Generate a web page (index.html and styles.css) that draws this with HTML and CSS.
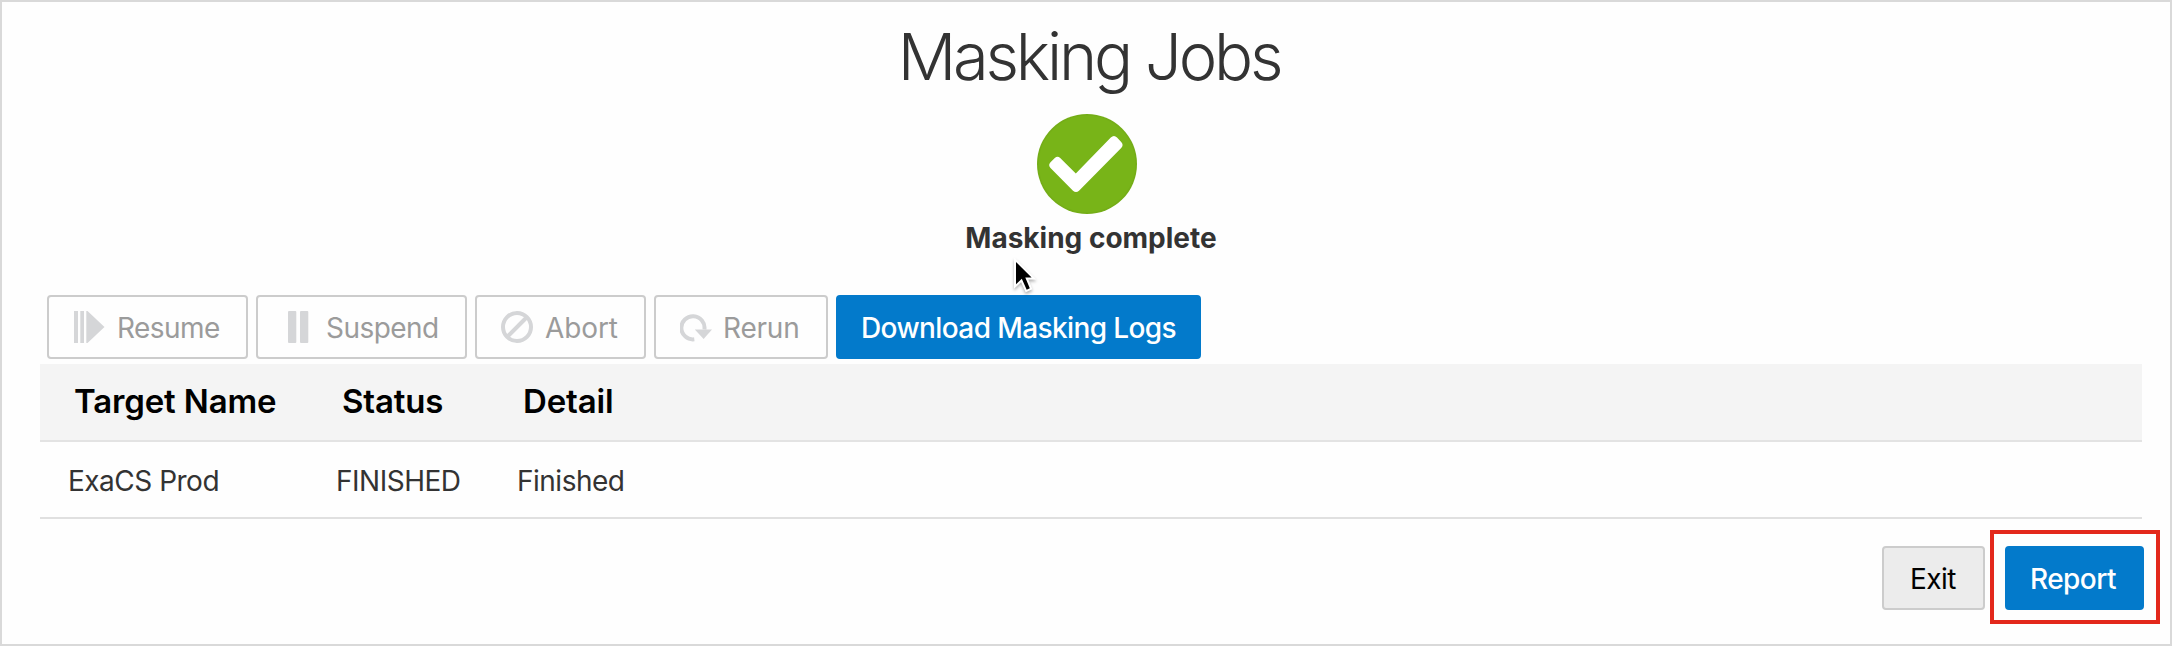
FILE: index.html
```html
<!DOCTYPE html>
<html lang="en">
<head>
<meta charset="utf-8">
<title>Masking Jobs</title>
<link rel="stylesheet" href="styles.css">
</head>
<body>
<main class="page">
  <header class="summary">
    <h1 class="title">Masking Jobs</h1>
    <svg class="done" viewBox="0 0 100 100" aria-hidden="true">
      <circle cx="50" cy="50" r="50" fill="#74ad17"/>
      <circle cx="50" cy="50" r="48.5" fill="#78b418"/>
      <path d="M17.8 44 Q20.5 41.5 23.2 44 L38.8 59.4 L73.8 23.6 Q77 20.5 80 23.6 L84.2 28 Q87 31 84.2 34 L42 76.7 Q39 79.5 36 76.7 L13.5 54 Q10.8 51 13.5 48.2 Z" fill="#fff"/>
    </svg>
    <p class="message">Masking complete</p>
    <svg class="pointer" viewBox="0 0 26 38" aria-hidden="true">
      <path d="M3 4 V26.2 L8.8 20.7 L13.7 31.7 L16.8 30.3 L12.3 19.5 H18.6 Z" fill="#fff" stroke="#fff" stroke-width="4"/>
      <path d="M3 4 V26.2 L8.8 20.7 L13.7 31.7 L16.8 30.3 L12.3 19.5 H18.6 Z" fill="#000"/>
    </svg>
  </header>

  <div class="toolbar">
    <button class="btn disabled resume" disabled>
      <svg class="icon" viewBox="0 0 32 32"><path d="M0 0H4V32H0zM6.3 0H10V32H6.3zM12.3 0H13.5L30.5 16L13.5 32H12.3z"/></svg><span>Resume</span>
    </button>
    <button class="btn disabled suspend" disabled>
      <svg class="icon" viewBox="0 0 32 32"><rect x="5" width="8.3" height="32" rx="1"/><rect x="17" width="8.3" height="32" rx="1"/></svg><span>Suspend</span>
    </button>
    <button class="btn disabled abort" disabled>
      <svg class="icon line" viewBox="0 0 32 32"><circle cx="16" cy="16" r="14"/><path d="M6.5 25.5L25.5 6.5"/></svg><span>Abort</span>
    </button>
    <button class="btn disabled rerun" disabled>
      <svg class="icon" viewBox="0 0 32 32"><path class="arc" d="M14.3 28.3A11.6 11.6 0 1 1 24.4 18.5"/><path d="M14.8 18.5H32L23.6 28z"/></svg><span>Rerun</span>
    </button>
    <button class="btn primary download"><span>Download Masking Logs</span></button>
  </div>

  <table class="jobs">
    <thead><tr><th class="target">Target Name</th><th class="status">Status</th><th>Detail</th></tr></thead>
    <tbody><tr><td>ExaCS Prod</td><td>FINISHED</td><td>Finished</td></tr></tbody>
  </table>

  <footer class="actions">
    <button class="btn exit"><span>Exit</span></button>
    <div class="highlight"><button class="btn primary report"><span>Report</span></button></div>
  </footer>
</main>
</body>
</html>
```
FILE: styles.css
```css
* { box-sizing: border-box; }
body { margin: 0; background: #fefefe; }
.page {
  width: 2172px;
  height: 646px;
  border: 2px solid #d9d9d9;
  background: #fefefe;
  padding: 18px 28px 0 38px;
  font-family: Inter, "Liberation Sans", sans-serif;
  font-size: 28px;
  color: #333;
  overflow: hidden;
}
.summary {
  position: relative;
  height: 275px;
  width: 2102px;
  display: flex;
  flex-direction: column;
  align-items: center;
}
.title {
  margin: 0 4px 0 0;
  height: 94px;
  line-height: 74px;
  font-size: 65px;
  font-weight: 350;
  letter-spacing: -3.2px;
}
.done { width: 100px; height: 100px; margin-right: 8px; flex: none; }
.message { margin: 7px 0 0; line-height: 34px; font-weight: 700; letter-spacing: 0; }
.pointer {
  position: absolute;
  left: 973px;
  top: 238px;
  width: 26px;
  height: 38px;
  filter: drop-shadow(0 2px 1.5px rgba(0, 0, 0, .3));
}
.toolbar { display: flex; gap: 8px; padding-left: 7px; margin-bottom: 5px; }
.btn {
  display: flex;
  align-items: center;
  height: 64px;
  padding: 2px 0 0 25px;
  border: 2px solid #ccc;
  border-radius: 4px;
  background: #fff;
  font: inherit;
  line-height: 34px;
  letter-spacing: -.55px;
  white-space: nowrap;
  flex: none;
}
.disabled { color: #9b9b9b; background: #fefefe; font-weight: 430; }
.icon { width: 32px; height: 32px; margin: -2px 11px 0 0; fill: #d5d6d8; flex: none; }
.line { fill: none; stroke: #d5d6d8; stroke-width: 4; }
.arc { fill: none; stroke: #d5d6d8; stroke-width: 4; }
.primary { background: #037acb; border-color: #037acb; color: #fff; padding-left: 23px; font-weight: 460; }
.resume { width: 201px; }
.suspend { width: 211px; }
.abort { width: 171px; padding-left: 24px; letter-spacing: -.1px; }
.abort .icon { margin-right: 12px; }
.rerun { width: 174px; padding-left: 24px; letter-spacing: -.2px; }
.download { width: 365px; letter-spacing: -.6px; }
.jobs { width: 2102px; border-collapse: separate; border-spacing: 0; table-layout: fixed; text-align: left; }
.jobs th {
  height: 78px;
  padding: 0 0 2px 34px;
  background: #f4f4f4;
  border-bottom: 2px solid #e3e3e3;
  font-size: 33px;
  font-weight: 630;
  letter-spacing: -.15px;
  color: #000;
}
.jobs td { height: 77px; padding: 3px 0 0 28px; border-bottom: 2px solid #e0e0e0; letter-spacing: -.5px; }
.jobs .target { width: 268px; }
.jobs .status { width: 181px; }
.actions { display: flex; align-items: center; justify-content: flex-end; gap: 5px; width: 2120px; margin-top: 11px; }
.exit { width: 103px; margin-top: 2px; padding-left: 26px; background: #ececec; color: #000; }
.highlight { border: 4px solid #e3281b; width: 170px; height: 94px; padding: 12px 0 0 11px; }
.report { width: 139px; }
```
